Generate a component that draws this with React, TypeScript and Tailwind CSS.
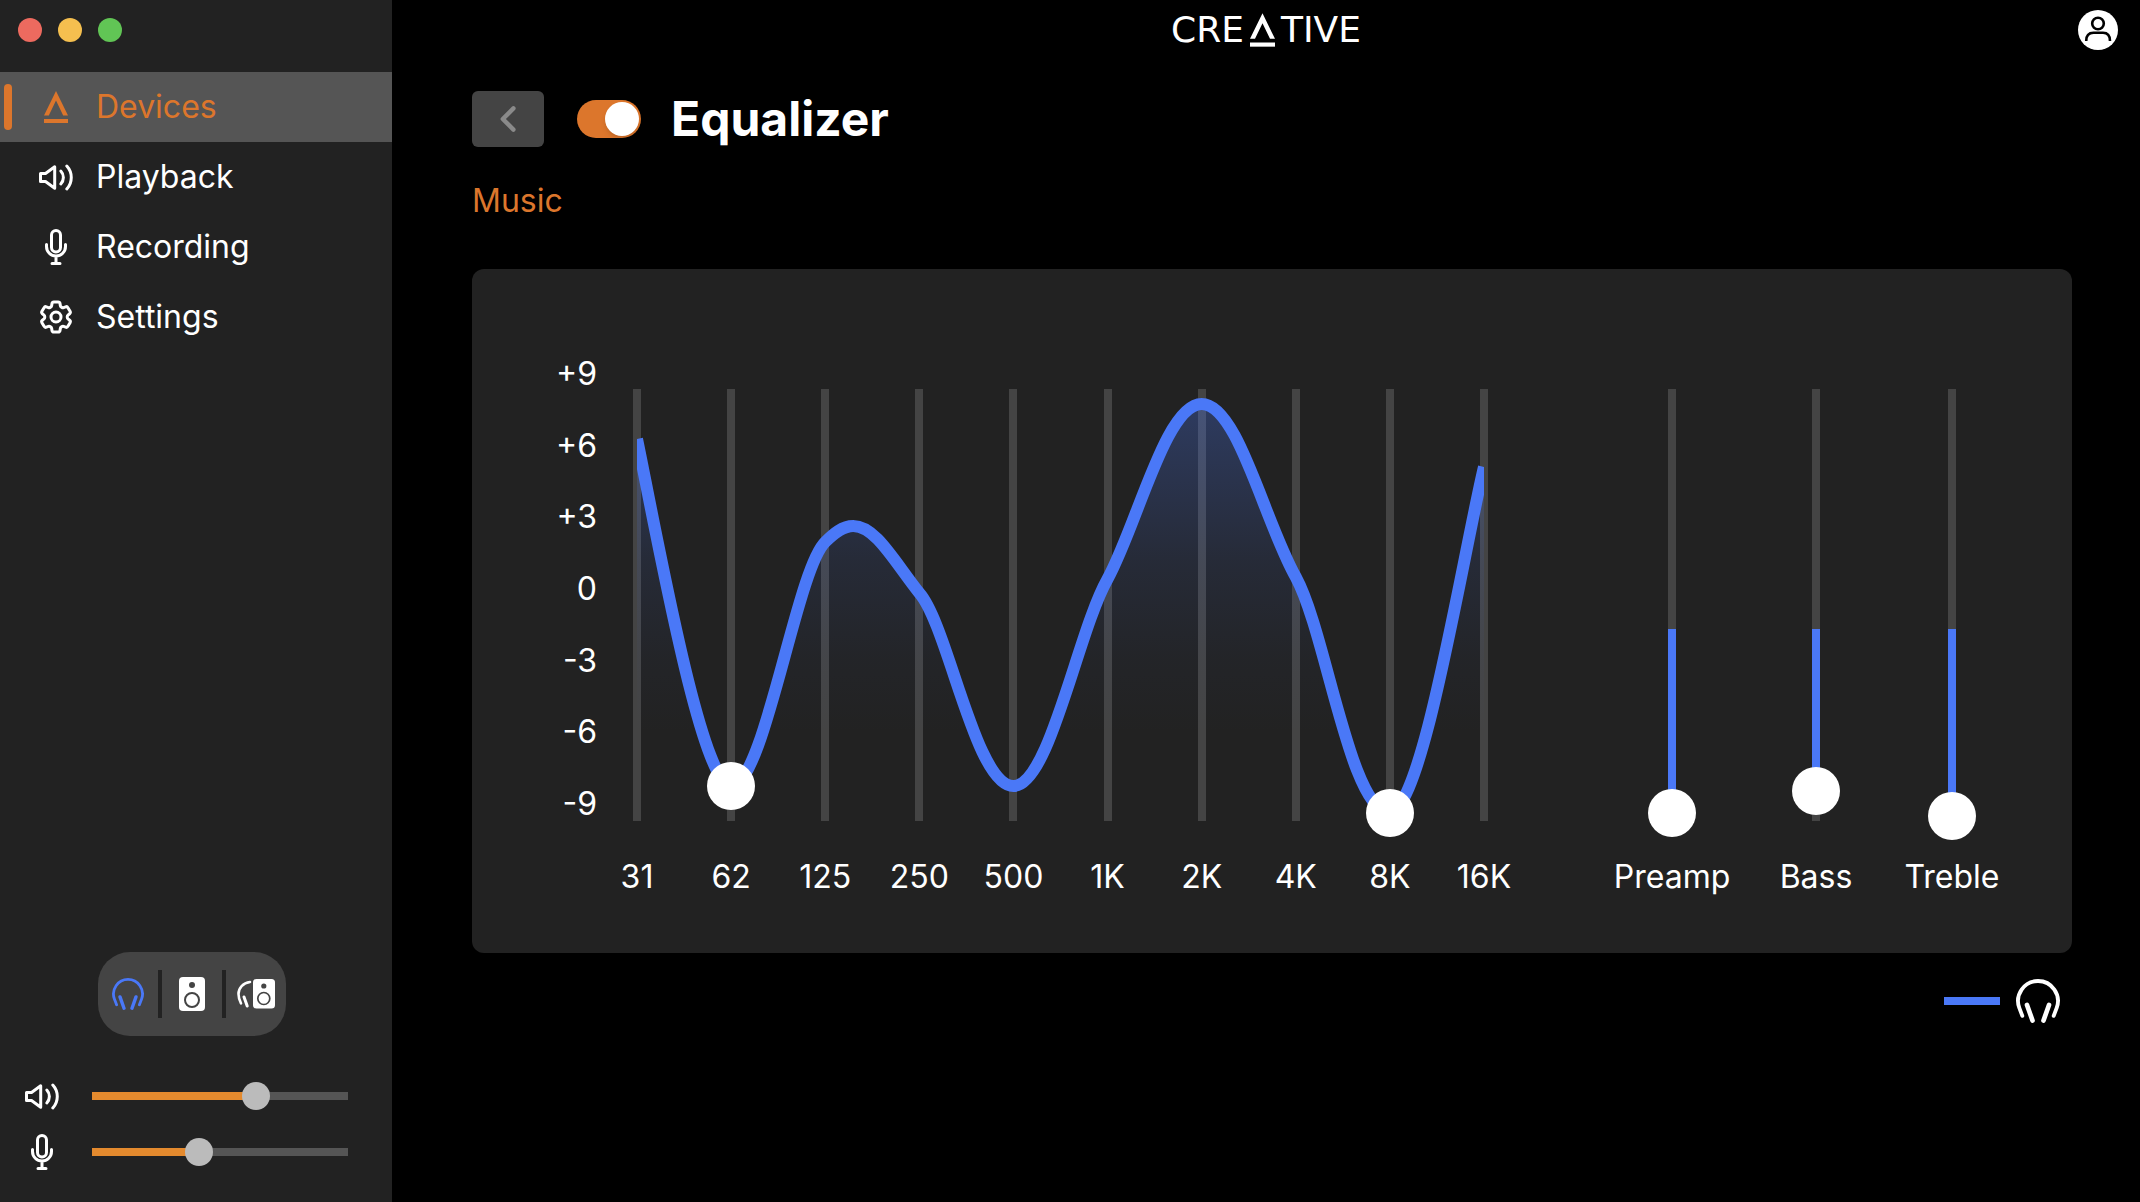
import { useState } from 'react'
import type { ReactNode } from 'react'
import { HiOutlineCog6Tooth } from 'react-icons/hi2'

// Each band carries its gain in dB, only the active ones show a handle
const BANDS = [
    { label: '31', gain: 6.9, handle: false },
    { label: '62', gain: -7.55, handle: true },
    { label: '125', gain: 2.6, handle: false },
    { label: '250', gain: 0.5, handle: false },
    { label: '500', gain: -7.55, handle: false },
    { label: '1K', gain: 1.1, handle: false },
    { label: '2K', gain: 8.4, handle: false },
    { label: '4K', gain: 1.1, handle: false },
    { label: '8K', gain: -8.65, handle: true },
    { label: '16K', gain: 5.7, handle: false },
]

const SCALE = ['+9', '+6', '+3', '0', '-3', '-6', '-9']

const CURVE = 'M0 50C19 141 64 397 94 397C127 397 159 181 188 153C196 145 205 137 216 137C238 137 256 171 282 204C311 237 338 397 376 397C412 397 440 243 470 190C500 135 528 15 564 15C600 15 626 131 658 188C689 245 712 423 752 423C784 423 824 171 846 78'

function CreativeMark({ className }: { className: string }) {
    return (
        <svg viewBox="0 0 24 32" className={className} fill="currentColor" aria-hidden="true">
            <path d="M12 0L24 24.5H19.2L12 9.4L4.8 24.5H0Z" />
            <path d="M0 28H24V32H0Z" />
        </svg>
    )
}

function SpeakerIcon() {
    return (
        <svg viewBox="0 0 34 27" className="w-[34px] h-[27px]" fill="none" stroke="currentColor" strokeWidth="3" strokeLinecap="round" strokeLinejoin="round" aria-hidden="true">
            <path d="M1.5 9.5H6.5L15.7 2.8V24.2L6.5 17.5H1.5Z" />
            <path d="M21.8 7a9.5 9.5 0 0 1 0 13" />
            <path d="M27.8 2a17 17 0 0 1 0 23" />
        </svg>
    )
}

function MicIcon() {
    return (
        <svg viewBox="0 0 22 36" className="w-[22px] h-9" fill="none" stroke="currentColor" strokeWidth="3" strokeLinecap="round" aria-hidden="true">
            <rect x="6.5" y="1.5" width="9" height="21.5" rx="4.5" />
            <path d="M1.5 15.5v2a9.5 9.5 0 0 0 19 0v-2M11 27v7M7 34.4h8" />
        </svg>
    )
}

function HeadphonesIcon({ className }: { className: string }) {
    return (
        <svg viewBox="0 0 32 32" className={className} fill="none" stroke="currentColor" strokeLinecap="round" aria-hidden="true">
            <path d="M4.6 26.8L2.4 21A14.5 14.5 0 1 1 29.6 21L27.4 26.8" strokeWidth="2.8" />
            <path d="M8 18.9L12 30.2M24 18.9L20 30.2" strokeWidth="3.4" />
        </svg>
    )
}

function CabinetIcon() {
    return (
        <svg viewBox="0 0 26 34" className="w-[26px] h-[34px]" aria-hidden="true">
            <rect width="26" height="34" rx="4" fill="#fff" />
            <circle cx="13" cy="8" r="3" fill="#444" />
            <circle cx="13" cy="23" r="7" fill="none" stroke="#444" strokeWidth="2" />
        </svg>
    )
}

function BothIcon() {
    return (
        <svg viewBox="0 0 38 30" className="w-[38px] h-[30px]" fill="none" aria-hidden="true">
            <path d="M13 3C6 4 1.5 9 1.5 15C1.5 18 2.5 21.5 4 24.3" stroke="#fff" strokeWidth="2.6" strokeLinecap="round" />
            <path d="M7 18L10.2 27" stroke="#fff" strokeWidth="3" strokeLinecap="round" />
            <rect x="16" width="22" height="29.5" rx="3.5" fill="#fff" />
            <circle cx="26.8" cy="7" r="2.6" fill="#444" />
            <circle cx="26.8" cy="19.5" r="6" stroke="#444" strokeWidth="1.7" />
        </svg>
    )
}

const NAV = [
    { label: 'Devices', icon: <CreativeMark className="w-6 h-8" /> },
    { label: 'Playback', icon: <SpeakerIcon /> },
    { label: 'Recording', icon: <MicIcon /> },
    { label: 'Settings', icon: <HiOutlineCog6Tooth className="w-10 h-10" strokeWidth={1.8} /> },
]

const OUTPUTS = [
    { label: 'Headphones', icon: <HeadphonesIcon className="w-8 h-8 text-[#4a78f7]" /> },
    { label: 'Speakers', icon: <CabinetIcon /> },
    { label: 'Headphones and speakers', icon: <BothIcon /> },
]

type LevelProps = { label: string; icon: ReactNode; initial: number }

function LevelSlider({ label, icon, initial }: LevelProps) {
    const [value, setValue] = useState(initial)

    return (
        <label className="flex h-14 items-center pl-5 pr-11">
            <span className="flex w-11 shrink-0 justify-center">{icon}</span>
            <input
                type="range"
                min={0}
                max={100}
                value={value}
                aria-label={label}
                onChange={(e) => setValue(Number(e.target.value))}
                style={{ background: `linear-gradient(to right, #e48a2e ${value}%, #555 ${value}%)` }}
                className="ml-7 h-2 min-w-0 flex-1 appearance-none cursor-pointer [&::-webkit-slider-runnable-track]:h-2 [&::-webkit-slider-thumb]:-mt-2.5 [&::-webkit-slider-thumb]:h-7 [&::-webkit-slider-thumb]:w-7 [&::-webkit-slider-thumb]:appearance-none [&::-webkit-slider-thumb]:rounded-full [&::-webkit-slider-thumb]:bg-[#bbb]"
            />
        </label>
    )
}

type FaderProps = { id: string; label: string; value: number; handle?: boolean; onChange?: (value: number) => void }

// Vertical range input, the track behind it is drawn by the parent
function Fader({ id, label, value, handle = true, onChange }: FaderProps) {
    const [gain, setGain] = useState(value)

    return (
        <input
            id={id}
            type="range"
            min={-9}
            max={9}
            step={0.05}
            value={gain}
            aria-label={label}
            onChange={(e) => {
                setGain(Number(e.target.value))
                onChange?.(Number(e.target.value))
            }}
            className={`relative z-10 block h-[480px] w-12 appearance-none cursor-pointer bg-transparent [direction:rtl] [writing-mode:vertical-lr] [&::-webkit-slider-thumb]:h-12 [&::-webkit-slider-thumb]:w-12 [&::-webkit-slider-thumb]:appearance-none [&::-webkit-slider-thumb]:rounded-full ${handle ? '[&::-webkit-slider-thumb]:bg-white' : '[&::-webkit-slider-thumb]:bg-transparent'}`}
        />
    )
}

function ToneFader({ label, initial, width }: { label: string; initial: number; width: string }) {
    const [value, setValue] = useState(initial)
    const id = label.toLowerCase()

    return (
        <div className={`flex flex-col items-center ${width}`}>
            <div className="relative">
                <div className="absolute inset-x-5 inset-y-6 bg-[#444]">
                    <div className="absolute inset-x-0 top-60 bg-[#4a78f7]" style={{ bottom: `${((value + 9) / 18) * 100}%` }} />
                </div>
                <Fader id={id} label={label} value={value} onChange={setValue} />
            </div>
            <label htmlFor={id} className="mt-3 leading-10">{label}</label>
        </div>
    )
}

function Sidebar() {
    const [active, setActive] = useState('Devices')

    return (
        <aside className="flex w-[392px] shrink-0 flex-col bg-[#222]">
            <div className="flex h-[72px] gap-4 pl-[18px] pt-[18px]">
                <button aria-label="Close" className="h-6 w-6 rounded-full bg-[#ed6a5f]" />
                <button aria-label="Minimize" className="h-6 w-6 rounded-full bg-[#f5bf4f]" />
                <button aria-label="Zoom" className="h-6 w-6 rounded-full bg-[#61c555]" />
            </div>

            <nav className="flex flex-col">
                {NAV.map((item) => (
                    <button
                        key={item.label}
                        onClick={() => setActive(item.label)}
                        className={`flex h-[70px] items-center pl-1 cursor-pointer ${active === item.label ? 'bg-[#555] text-[#dc762c]' : ''}`}
                    >
                        <span className={`h-[46px] w-2 rounded-full ${active === item.label ? 'bg-[#dc762c]' : ''}`} />
                        <span className="ml-5 flex w-12 justify-center">{item.icon}</span>
                        <span className="ml-4">{item.label}</span>
                    </button>
                ))}
            </nav>

            <div className="mt-auto flex flex-col pb-[22px]">
                <div className="mb-8 ml-[98px] flex h-[84px] items-center self-start rounded-4xl bg-[#444]">
                    {OUTPUTS.map((output, i) => (
                        <div key={output.label} className="flex items-center">
                            {i > 0 && <div className="h-12 w-1 bg-[#222]" />}
                            <button aria-label={output.label} className="flex h-[84px] w-[60px] items-center justify-center cursor-pointer">{output.icon}</button>
                        </div>
                    ))}
                </div>
                <LevelSlider label="Playback volume" icon={<SpeakerIcon />} initial={66} />
                <LevelSlider label="Recording volume" icon={<MicIcon />} initial={41} />
            </div>
        </aside>
    )
}

function EqualizerPanel() {
    return (
        <section className="flex rounded-xl bg-[#222] pb-14 pr-[68px]">
            <div className="mt-[85px] flex h-[470px] w-[125px] flex-col justify-between text-right leading-10">
                {SCALE.map((mark) => <span key={mark}>{mark}</span>)}
            </div>

            <div className="relative ml-2 mt-24 flex flex-1 justify-between">
                {BANDS.map((band) => (
                    <div key={band.label} className="flex w-16 flex-col items-center">
                        <div className="relative">
                            <div className="absolute inset-x-5 inset-y-6 bg-[#444]" />
                            <Fader id={`band-${band.label}`} label={`${band.label} Hz`} value={band.gain} handle={band.handle} />
                        </div>
                        <label htmlFor={`band-${band.label}`} className="mt-3 leading-10">{band.label}</label>
                    </div>
                ))}

                {/* Response curve, sits between the tracks and the handles */}
                <div className="pointer-events-none absolute inset-x-8 top-6 h-[432px]">
                    <svg viewBox="0 0 846 432" preserveAspectRatio="none" className="h-full w-full" fill="none" aria-hidden="true">
                        <defs>
                            <linearGradient id="response" x1="0" y1="0" x2="0" y2="432" gradientUnits="userSpaceOnUse">
                                <stop offset="0" stopColor="#4a78f7" stopOpacity="0.31" />
                                <stop offset="0.4" stopColor="#4a78f7" stopOpacity="0.1" />
                                <stop offset="0.62" stopColor="#4a78f7" stopOpacity="0.03" />
                                <stop offset="0.8" stopColor="#4a78f7" stopOpacity="0" />
                            </linearGradient>
                        </defs>
                        <path d={`${CURVE}V432H0Z`} fill="url(#response)" />
                        <path d={CURVE} stroke="#4a78f7" strokeWidth="12" vectorEffect="non-scaling-stroke" />
                    </svg>
                </div>
            </div>

            <div className="ml-24 mt-24 flex gap-11">
                <ToneFader label="Preamp" initial={-8.65} width="w-[120px]" />
                <ToneFader label="Bass" initial={-7.75} width="w-20" />
                <ToneFader label="Treble" initial={-8.8} width="w-[104px]" />
            </div>
        </section>
    )
}

function App() {
    const [enabled, setEnabled] = useState(true)

    return (
        <div className="flex min-h-screen bg-black font-['Inter',sans-serif] text-[32px] text-white">
            <Sidebar />

            <main className="min-w-0 flex-1">
                <header className="grid grid-cols-[1fr_auto_1fr] items-center pt-2.5">
                    <div />
                    <div className="flex items-center gap-1.5 font-['DejaVu_Sans',sans-serif] text-[36px] leading-10">
                        <span>CRE</span>
                        <CreativeMark className="h-[34px] w-[25px]" />
                        <span>TIVE</span>
                    </div>
                    <div className="flex justify-end pr-[22px]">
                        <button aria-label="Account" className="h-10 w-10 rounded-full bg-white text-black cursor-pointer">
                            <svg viewBox="0 0 40 40" className="h-10 w-10" fill="none" stroke="currentColor" strokeWidth="2.6" aria-hidden="true">
                                <circle cx="20" cy="13.5" r="5.8" />
                                <path d="M8.2 31C8.2 25.5 11 22.8 15.5 22.8H25C29.5 22.8 32 25.5 32 31" />
                            </svg>
                        </button>
                    </div>
                </header>

                <div className="pb-10 pl-20 pr-[68px] pt-[41px]">
                    <div className="flex h-14 items-center">
                        <button aria-label="Back" className="flex h-14 w-[72px] items-center justify-center rounded-md bg-[#444] text-[#8a8a8a] cursor-pointer">
                            <svg viewBox="0 0 16 26" className="h-[26px] w-4" fill="none" stroke="currentColor" strokeWidth="4.4" strokeLinecap="round" strokeLinejoin="round" aria-hidden="true">
                                <path d="M13.4 2.4L2.8 13L13.4 23.6" />
                            </svg>
                        </button>
                        <input
                            id="equalizer"
                            type="checkbox"
                            role="switch"
                            checked={enabled}
                            onChange={() => setEnabled(!enabled)}
                            className="ml-[33px] flex h-[38px] w-16 appearance-none items-center rounded-full bg-[#555] px-0.5 cursor-pointer before:h-[34px] before:w-[34px] before:rounded-full before:bg-white before:shadow-md checked:justify-end checked:bg-[#dc762c]"
                        />
                        <h1 className="ml-[30px] text-5xl font-bold"><label htmlFor="equalizer">Equalizer</label></h1>
                    </div>

                    <p className="mb-12 mt-[34px] leading-10 text-[#dc762c]">Music</p>

                    <EqualizerPanel />

                    <div className="mt-[26px] flex items-center justify-end gap-4 pr-3">
                        <div className="h-2 w-14 bg-[#4a78f7]" />
                        <HeadphonesIcon className="h-11 w-11" />
                    </div>
                </div>
            </main>
        </div>
    )
}

export default App
